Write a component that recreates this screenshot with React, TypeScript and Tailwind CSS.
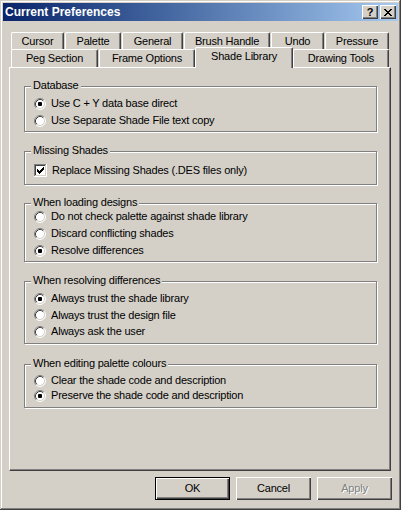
import React from "react";

const font = { fontFamily: '"Liberation Sans", Arial, sans-serif' };

function Radio({ checked }: { checked?: boolean }) {
  return (
    <svg width="12" height="12" viewBox="0 0 12 12" className="shrink-0">
      <circle cx="6" cy="6" r="5" fill="#ffffff" />
      <path d="M2.11 9.89 A5.5 5.5 0 0 1 9.89 2.11" fill="none" stroke="#808080" strokeWidth="1" />
      <path d="M9.89 2.11 A5.5 5.5 0 0 1 2.11 9.89" fill="none" stroke="#ffffff" strokeWidth="1" />
      <path d="M2.82 9.18 A4.5 4.5 0 0 1 9.18 2.82" fill="none" stroke="#404040" strokeWidth="1" />
      <path d="M9.18 2.82 A4.5 4.5 0 0 1 2.82 9.18" fill="none" stroke="#d4d0c8" strokeWidth="1" />
      {checked && <rect x="4" y="4" width="4" height="4" rx="1" fill="#000000" />}
    </svg>
  );
}

function Check({ checked }: { checked?: boolean }) {
  const px: [number, number][] = [
    [9, 3],
    [8, 4], [9, 4],
    [3, 5], [7, 5], [8, 5], [9, 5],
    [3, 6], [4, 6], [6, 6], [7, 6], [8, 6],
    [3, 7], [4, 7], [5, 7], [6, 7], [7, 7],
    [4, 8], [5, 8], [6, 8],
    [5, 9],
  ];
  return (
    <svg width="13" height="13" viewBox="0 0 13 13" className="shrink-0" shapeRendering="crispEdges">
      <rect x="0" y="0" width="13" height="13" fill="#ffffff" />
      <rect x="0" y="0" width="12" height="1" fill="#808080" />
      <rect x="0" y="0" width="1" height="12" fill="#808080" />
      <rect x="1" y="1" width="10" height="1" fill="#404040" />
      <rect x="1" y="1" width="1" height="10" fill="#404040" />
      <rect x="12" y="0" width="1" height="13" fill="#ffffff" />
      <rect x="0" y="12" width="13" height="1" fill="#ffffff" />
      <rect x="11" y="1" width="1" height="11" fill="#d4d0c8" />
      <rect x="1" y="11" width="11" height="1" fill="#d4d0c8" />
      {checked && px.map(([x, y], i) => <rect key={i} x={x} y={y} width="1" height="1" fill="#000000" />)}
    </svg>
  );
}

function Group({
  title,
  className,
  children,
}: {
  title: string;
  className: string;
  children: React.ReactNode;
}) {
  return (
    <div
      className={
        "relative w-[353px] border border-[#808080] shadow-[1px_1px_0_#ffffff,inset_1px_1px_0_#ffffff] " +
        className
      }
    >
      <span className="absolute left-[6px] top-[-8px] h-[13px] bg-[#d4d0c8] px-[2px] leading-[13px]">{title}</span>
      {children}
    </div>
  );
}

function Row({ h, children }: { h: string; children: React.ReactNode }) {
  return <div className={"flex items-center gap-[5px] pl-[9px] " + h}>{children}</div>;
}

function Tab({ label, w, selected }: { label: string; w: string; selected?: boolean }) {
  return (
    <div
      className={
        "flex shrink-0 justify-center rounded-tl-[2px] rounded-tr-[2px] border-l border-t border-r border-l-white border-t-white border-r-[#404040] bg-[#d4d0c8] shadow-[inset_-1px_0_0_#808080] " +
        w +
        (selected ? " relative z-10 mt-[-2px] h-[21px] pt-[2px]" : " h-full pt-[2px]")
      }
    >
      <span className="leading-[13px]">{label}</span>
    </div>
  );
}

function Button({ label, def, disabled }: { label: string; def?: boolean; disabled?: boolean }) {
  return (
    <div
      className={
        "flex h-[23px] w-[75px] items-center justify-center bg-[#d4d0c8] " +
        (def
          ? "border border-black shadow-[inset_1px_1px_0_#ffffff,inset_-1px_-1px_0_#404040,inset_-2px_-2px_0_#808080]"
          : "shadow-[inset_1px_1px_0_#ffffff,inset_-1px_-1px_0_#404040,inset_-2px_-2px_0_#808080]")
      }
    >
      <span className={disabled ? "text-[#808080] [text-shadow:1px_1px_0_#ffffff]" : "text-black"}>{label}</span>
    </div>
  );
}

export default function App() {
  return (
    <div
      style={font}
      className="flex h-[510px] w-[401px] flex-col bg-[#d4d0c8] p-[3px] text-[11px] leading-[13px] tracking-[-0.2px] text-black shadow-[inset_-1px_-1px_0_#404040,inset_1px_1px_0_#d4d0c8,inset_-2px_-2px_0_#808080,inset_2px_2px_0_#ffffff]"
    >
      {/* Title bar */}
      <div className="flex h-[18px] shrink-0 items-center bg-gradient-to-r from-[#0a246a] to-[#a6caf0] pl-[2px] pr-[2px]">
        <span className="flex-1 text-[12px] font-bold tracking-[0px] text-white">Current Preferences</span>
        <div className="flex gap-[2px]">
          <div className="flex h-[14px] w-[16px] items-center justify-center bg-[#d4d0c8] shadow-[inset_1px_1px_0_#ffffff,inset_-1px_-1px_0_#404040,inset_-2px_-2px_0_#808080]">
            <span className="text-[11px] font-bold leading-[11px]">?</span>
          </div>
          <div className="flex h-[14px] w-[16px] items-center justify-center bg-[#d4d0c8] shadow-[inset_1px_1px_0_#ffffff,inset_-1px_-1px_0_#404040,inset_-2px_-2px_0_#808080]">
            <svg width="8" height="7" viewBox="0 0 8 7" shapeRendering="crispEdges">
              <path d="M0 0h2v1h-2zM6 0h2v1h-2zM1 1h2v1h-2zM5 1h2v1h-2zM2 2h4v1h-4zM3 3h2v1h-2zM2 4h4v1h-4zM1 5h2v1h-2zM5 5h2v1h-2zM0 6h2v1h-2zM6 6h2v1h-2z" fill="#000" />
            </svg>
          </div>
        </div>
      </div>

      {/* Tabs */}
      <div className="ml-[6px] mt-[11px] flex w-[382px] flex-col">
        <div className="flex h-[17px] gap-[1px] pl-[2px]">
          <Tab label="Cursor" w="w-[53px]" />
          <Tab label="Palette" w="w-[56px]" />
          <Tab label="General" w="w-[61px]" />
          <Tab label="Brush Handle" w="w-[86px]" />
          <Tab label="Undo" w="w-[53px]" />
          <Tab label="Pressure" w="w-[64px]" />
        </div>
        <div className="flex h-[18px] items-start pl-[2px]">
          <div className="flex h-full">
            <Tab label="Peg Section" w="w-[87px]" />
          </div>
          <div className="ml-[1px] flex h-full">
            <Tab label="Frame Options" w="w-[96px]" />
          </div>
          <Tab label="Shade Library" w="w-[98px]" selected />
          <div className="flex h-full">
            <Tab label="Drawing Tools" w="w-[96px]" />
          </div>
        </div>

        {/* Panel */}
        <div className="flex h-[404px] flex-col border-l border-t border-l-white border-t-white border-r border-b border-r-[#404040] border-b-[#404040] pl-[14px] shadow-[inset_-1px_-1px_0_#808080]">
          <Group title="Database" className="mt-[18px] h-[46px] pt-[8px]">
            <Row h="h-[17px]">
              <Radio checked />
              <span>Use C + Y data base direct</span>
            </Row>
            <Row h="h-[17px]">
              <Radio />
              <span>Use Separate Shade File text copy</span>
            </Row>
          </Group>

          <Group title="Missing Shades" className="mt-[19px] h-[34px] pt-[10px]">
            <Row h="h-[17px]">
              <Check checked />
              <span>Replace Missing Shades (.DES files only)</span>
            </Row>
          </Group>

          <Group title="When loading designs" className="mt-[18px] h-[59px] pt-[4px]">
            <Row h="h-[17px]">
              <Radio />
              <span>Do not check palette against shade library</span>
            </Row>
            <Row h="h-[17px]">
              <Radio />
              <span>Discard conflicting shades</span>
            </Row>
            <Row h="h-[17px]">
              <Radio checked />
              <span>Resolve differences</span>
            </Row>
          </Group>

          <Group title="When resolving differences" className="mt-[19px] h-[63px] pt-[8px]">
            <Row h="h-[17px]">
              <Radio checked />
              <span>Always trust the shade library</span>
            </Row>
            <Row h="h-[16px]">
              <Radio />
              <span>Always trust the design file</span>
            </Row>
            <Row h="h-[17px]">
              <Radio />
              <span>Always ask the user</span>
            </Row>
          </Group>

          <Group title="When editing palette colours" className="mt-[20px] h-[44px] pt-[8px]">
            <Row h="h-[15px]">
              <Radio />
              <span>Clear the shade code and description</span>
            </Row>
            <Row h="h-[15px]">
              <Radio checked />
              <span>Preserve the shade code and description</span>
            </Row>
          </Group>
        </div>
      </div>

      {/* Buttons */}
      <div className="mt-[6px] flex justify-end gap-[6px] pr-[6px]">
        <Button label="OK" def />
        <Button label="Cancel" />
        <Button label="Apply" disabled />
      </div>
    </div>
  );
}
